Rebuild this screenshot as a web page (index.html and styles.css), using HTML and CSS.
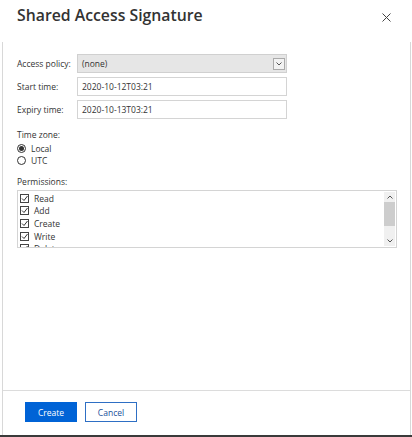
FILE: index.html
```html
<!DOCTYPE html>
<html lang="en">

<head>
    <meta charset="UTF-8">
    <meta name="viewport" content="width=device-width, initial-scale=1.0">
    <title>Shared Access Signature</title>
    <link rel="stylesheet" href="styles.css">
</head>

<body>
    <div class="dialog">
        <header class="dialog-header">
            <h1>Shared Access Signature</h1>
            <button class="close" aria-label="Close">
                <svg width="9" height="9" viewBox="0 0 9 9">
                    <path d="M0.5 0.5 L8.5 8.5 M8.5 0.5 L0.5 8.5" stroke="#444" stroke-width="1" fill="none" />
                </svg>
            </button>
        </header>

        <div class="panel">
            <div class="form">
                <div class="field">
                    <label>Access policy:</label>
                    <div class="select">
                        <span>(none)</span>
                        <span class="select-arrow">
                            <svg width="6" height="4" viewBox="0 0 6 4">
                                <path d="M0.5 0.5 L3 3 L5.5 0.5" stroke="#555" fill="none" />
                            </svg>
                        </span>
                    </div>
                </div>
                <div class="field">
                    <label>Start time:</label>
                    <div class="input">2020-10-12T03:21</div>
                </div>
                <div class="field">
                    <label>Expiry time:</label>
                    <div class="input">2020-10-13T03:21</div>
                </div>

                <div class="group-label timezone-label">Time zone:</div>
                <div class="radio"><span class="dot checked"></span>Local</div>
                <div class="radio"><span class="dot"></span>UTC</div>

                <div class="group-label permissions-label">Permissions:</div>
                <div class="listbox">
                    <div class="list-items">
                        <div class="check"><span class="box"><svg width="7" height="7" viewBox="0 0 7 7"><path d="M1 3.5 L3 5.5 L6.5 1" stroke="#333" fill="none" /></svg></span>Read</div>
                        <div class="check"><span class="box"><svg width="7" height="7" viewBox="0 0 7 7"><path d="M1 3.5 L3 5.5 L6.5 1" stroke="#333" fill="none" /></svg></span>Add</div>
                        <div class="check"><span class="box"><svg width="7" height="7" viewBox="0 0 7 7"><path d="M1 3.5 L3 5.5 L6.5 1" stroke="#333" fill="none" /></svg></span>Create</div>
                        <div class="check"><span class="box"><svg width="7" height="7" viewBox="0 0 7 7"><path d="M1 3.5 L3 5.5 L6.5 1" stroke="#333" fill="none" /></svg></span>Write</div>
                        <div class="check"><span class="box"><svg width="7" height="7" viewBox="0 0 7 7"><path d="M1 3.5 L3 5.5 L6.5 1" stroke="#333" fill="none" /></svg></span>Delete</div>
                    </div>
                    <div class="scrollbar">
                        <span class="arrow">
                            <svg width="6" height="4" viewBox="0 0 6 4">
                                <path d="M0.5 3.5 L3 1 L5.5 3.5" stroke="#555" fill="none" />
                            </svg>
                        </span>
                        <span class="thumb"></span>
                        <span class="track"></span>
                        <span class="arrow">
                            <svg width="6" height="4" viewBox="0 0 6 4">
                                <path d="M0.5 0.5 L3 3 L5.5 0.5" stroke="#555" fill="none" />
                            </svg>
                        </span>
                    </div>
                </div>
            </div>

            <footer class="dialog-footer">
                <button class="btn btn-primary">Create</button>
                <button class="btn btn-default">Cancel</button>
            </footer>
        </div>
        <div class="taskbar"></div>
    </div>
</body>

</html>
```

FILE: styles.css
```css
* {
    box-sizing: border-box;
}

body {
    margin: 0;
    background-color: #ffffff;
    font-family: "Open Sans", "Noto Sans", sans-serif;
    color: #333333;
}

.dialog {
    height: 437px;
    display: flex;
    flex-direction: column;
}

.dialog-header {
    height: 42px;
    display: flex;
    justify-content: space-between;
    align-items: flex-start;
    padding: 4px 21px 0 17px;
}

.dialog-header h1 {
    margin: 0;
    font-size: 15.8px;
    font-weight: 600;
    line-height: 22px;
    color: #333333;
}

.close {
    border: none;
    background: none;
    padding: 0;
    margin-top: 6px;
    cursor: pointer;
}

.panel {
    flex: 1;
    display: flex;
    flex-direction: column;
    margin: 0 1px 0 2px;
    border-left: 1px solid #d8d8d8;
    border-right: 1px solid #d8d8d8;
}

.form {
    flex: 1;
    padding: 12px 13px 0 14px;
    font-size: 8.5px;
}

.field {
    display: grid;
    grid-template-columns: 60px 210px;
    align-items: center;
    margin-bottom: 4px;
}

.field label {
    color: #333333;
}

.select,
.input {
    height: 19px;
    display: flex;
    align-items: center;
    padding: 0 4px;
    border: 1px solid #d4d4d4;
    background-color: #ffffff;
}

.select {
    justify-content: space-between;
    background-color: #e6e6e6;
    border-color: #d0d0d0;
    padding-right: 1px;
}

.select-arrow {
    width: 12px;
    height: 12px;
    display: flex;
    align-items: center;
    justify-content: center;
    border: 1px solid #aaaaaa;
    background-color: #f2f2f2;
}

.group-label {
    line-height: 12px;
}

.timezone-label {
    margin-top: 10px;
    margin-bottom: 1px;
}

.permissions-label {
    margin-top: 10px;
    margin-bottom: 2px;
}

.radio {
    display: flex;
    align-items: center;
    height: 12px;
}

.dot {
    width: 9px;
    height: 9px;
    border: 1px solid #333333;
    border-radius: 50%;
    margin-right: 5px;
    display: flex;
    align-items: center;
    justify-content: center;
}

.dot.checked::after {
    content: "";
    width: 5px;
    height: 5px;
    border-radius: 50%;
    background-color: #333333;
}

.listbox {
    height: 58px;
    display: flex;
    border: 1px solid #d4d4d4;
    overflow: hidden;
}

.list-items {
    flex: 1;
    padding: 1px 0 0 2px;
}

.check {
    display: flex;
    align-items: center;
    height: 12.6px;
}

.box {
    width: 9px;
    height: 9px;
    border: 1px solid #444444;
    margin-right: 5px;
    display: flex;
    align-items: center;
    justify-content: center;
}

.scrollbar {
    width: 11px;
    margin: 1px;
    display: flex;
    flex-direction: column;
    background-color: #f0f0f0;
}

.scrollbar .arrow {
    height: 10px;
    display: flex;
    align-items: center;
    justify-content: center;
}

.scrollbar .thumb {
    height: 24px;
    background-color: #cdcdcd;
}

.scrollbar .track {
    flex: 1;
}

.dialog-footer {
    height: 45px;
    display: flex;
    gap: 8px;
    padding: 11px 22px 0 22px;
    border-top: 1px solid #dcdcdc;
}

.btn {
    height: 20px;
    width: 52px;
    font-family: "Open Sans", "Noto Sans", sans-serif;
    font-size: 8.5px;
    border-radius: 0;
    cursor: pointer;
}

.btn-primary {
    background-color: #0063d6;
    border: 1px solid #0063d6;
    color: #ffffff;
}

.btn-default {
    background-color: #ffffff;
    border: 1px solid #2e6fc4;
    color: #1a4f9a;
}

.taskbar {
    height: 2px;
    background-color: #3a3a3a;
}
```
